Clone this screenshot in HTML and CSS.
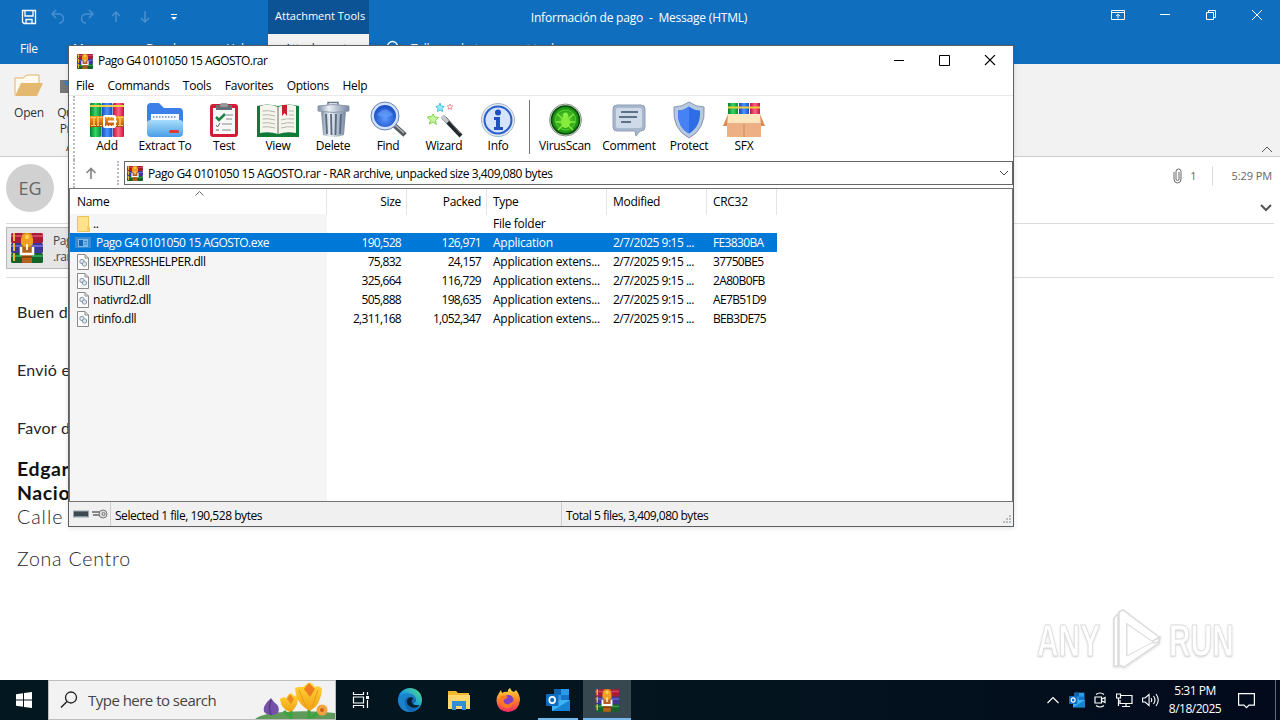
FILE: index.html
```html
<!DOCTYPE html>
<html lang="en">
<head>
<meta charset="utf-8">
<title>Información de pago - Message (HTML)</title>
<link rel="stylesheet" href="styles.css">
</head>
<body>
<svg class="defs" width="0" height="0">
  <defs>
    <linearGradient id="gBlue" x1="0" y1="0" x2="0" y2="1"><stop offset="0" stop-color="#a7dcfb"/><stop offset="1" stop-color="#4a9fe8"/></linearGradient>
    <linearGradient id="gSteel" x1="0" y1="0" x2="1" y2="0"><stop offset="0" stop-color="#7d8fa3"/><stop offset=".35" stop-color="#eaf0f6"/><stop offset="1" stop-color="#7486a0"/></linearGradient>
    <linearGradient id="gG" x1="0" x2="1" y1="0" y2="0"><stop offset="0" stop-color="#0c7a2c"/><stop offset=".5" stop-color="#35d866"/><stop offset="1" stop-color="#0c8a30"/></linearGradient>
    <linearGradient id="gB" x1="0" x2="1" y1="0" y2="0"><stop offset="0" stop-color="#1746b4"/><stop offset=".5" stop-color="#4c94ff"/><stop offset="1" stop-color="#1b4ec0"/></linearGradient>
    <linearGradient id="gR" x1="0" x2="1" y1="0" y2="0"><stop offset="0" stop-color="#c01338"/><stop offset=".5" stop-color="#ff6286"/><stop offset="1" stop-color="#c8153c"/></linearGradient>
    <linearGradient id="gBelt" x1="0" x2="0" y1="0" y2="1"><stop offset="0" stop-color="#f0a02c"/><stop offset=".5" stop-color="#dd7a12"/><stop offset="1" stop-color="#a84e08"/></linearGradient>
    <linearGradient id="gEdge" x1="0" x2="1" y1="1" y2="0"><stop offset="0" stop-color="#0c56a8"/><stop offset=".5" stop-color="#1b9de0"/><stop offset="1" stop-color="#58e07c"/></linearGradient>
    <linearGradient id="gFox" x1="0" x2="0" y1="0" y2="1"><stop offset="0" stop-color="#ffe04a"/><stop offset=".45" stop-color="#ff8a22"/><stop offset="1" stop-color="#f5286a"/></linearGradient>
    <linearGradient id="gPetal" x1="0" x2="0" y1="0" y2="1"><stop offset="0" stop-color="#ffd53a"/><stop offset="1" stop-color="#f2a012"/></linearGradient>
    <radialGradient id="gVirus"><stop offset="0" stop-color="#6fe030"/><stop offset="1" stop-color="#128812"/></radialGradient>
    <radialGradient id="gLens" cx=".5" cy=".6"><stop offset="0" stop-color="#5c9bff"/><stop offset="1" stop-color="#1b4fc4"/></radialGradient>
    <symbol id="rar" viewBox="0 0 32 30">
      <rect x="0" y="0" width="32" height="10" rx="1.5" fill="#a81c38"/><rect x="0" y="2" width="32" height="2" fill="#cf4560"/>
      <rect x="0" y="10" width="32" height="10" rx="1.5" fill="#3c3796"/><rect x="0" y="12" width="32" height="2" fill="#6a68cc"/>
      <rect x="0" y="20" width="32" height="10" rx="1.5" fill="#14642a"/><rect x="0" y="22" width="32" height="2" fill="#2f9c52"/>
      <path d="M3 0v30" stroke="#e2b93a" stroke-width="2" stroke-dasharray="8 2"/>
      <rect x="11" y="0" width="10" height="30" fill="#b4611c"/>
      <path d="M10 11V6q1-6 6-6t6 6v5l-3 3h-6z" fill="#f0a020"/><circle cx="16" cy="4" r="2" fill="#ffd95a"/>
      <path d="M10 14v7h12v-7" fill="none" stroke="#fff" stroke-width="2.500"/><path d="M16 11v6" stroke="#fff3d0" stroke-width="2"/>
      <path d="M11 24h10" stroke="#7d3c08" stroke-width="1.500"/>
    </symbol>
    <symbol id="dll" viewBox="0 0 12 16">
      <path d="M.5.5h7.500l3.500 3.500v11.500H.5z" fill="#fbfbfb" stroke="#8a8a8a"/><path d="M8 .5V4h3.500" fill="none" stroke="#8a8a8a"/>
      <circle cx="5" cy="7.500" r="2.200" fill="#dfe6ec" stroke="#8599aa"/><circle cx="7.500" cy="10" r="2.200" fill="#dfe6ec" stroke="#8599aa"/>
    </symbol>
    <symbol id="outlook" viewBox="0 0 24 22">
      <path d="M8 0h15v12H8z" fill="#2a9be8"/><path d="M8 0h7v6H8z" fill="#0f63b0"/><path d="M15 6h8v6h-8z" fill="#1673c8"/><path d="M6 11l18 0v11H6z" fill="#3db4f2"/><path d="M6 22l18-11v11z" fill="#1683d4"/>
      <rect x="0" y="5" width="12.500" height="12" rx="1" fill="#0f6cc0"/><ellipse cx="6.200" cy="11" rx="2.900" ry="3.200" fill="none" stroke="#fff" stroke-width="1.700"/>
    </symbol>
  </defs>
</svg>

<div class="desktop">
  <header class="titlebar">
    <div class="quick">
      <svg width="16" height="16" viewBox="0 0 16 16"><path d="M1.500 1.500h13v13H3l-1.500-1.500zM4 1.500V7h8V1.500M5 14.500V10.500h6v4" fill="none" stroke="#fff" stroke-width="1.300"/></svg>
      <svg class="dim" width="16" height="16" viewBox="0 0 16 16"><path d="M6 1L2 5l4 4M2 5h7a4.500 4.500 0 010 9"/></svg>
      <svg class="dim" width="16" height="16" viewBox="0 0 16 16"><path d="M10 1l4 4-4 4M14 5H7a4.500 4.500 0 000 9"/></svg>
      <svg class="dim" width="16" height="16" viewBox="0 0 16 16"><path d="M8 13V3M4 7l4-4 4 4"/></svg>
      <svg class="dim" width="16" height="16" viewBox="0 0 16 16"><path d="M8 2v11M4 9l4 4 4-4"/></svg>
      <svg width="16" height="16" viewBox="0 0 16 16"><path d="M5 5.500h6" stroke="#fff"/><path d="M5 8h6l-3 3z" fill="#fff"/></svg>
    </div>
    <div class="tooltab">Attachment Tools</div>
    <div class="doc-title">Información de pago&nbsp; - &nbsp;Message (HTML)</div>
    <div class="win-controls">
      <svg width="14" height="12" viewBox="0 0 14 12"><path d="M.5 1.500h13v9H.5zM.5 3.500h13M7 9.500v-4M5 7.200l2-2 2 2" fill="none" stroke="#fff"/></svg>
      <svg width="12" height="12" viewBox="0 0 12 12"><path d="M1 5.500h10" stroke="#fff"/></svg>
      <svg width="12" height="12" viewBox="0 0 12 12"><path d="M1.500 3.500h7v7h-7zM3.500 3v-1.500h7v7H9" fill="none" stroke="#fff"/></svg>
      <svg width="12" height="12" viewBox="0 0 12 12"><path d="M1 1l10 10M11 1L1 11" stroke="#fff"/></svg>
    </div>
  </header>
  <nav class="tabs">
    <span class="tab-file">File</span><span class="tab-msg">Message</span><span class="tab-dev">Developer</span><span class="tab-help">Help</span><span class="tab-active">Attachments</span>
    <svg width="13" height="18" viewBox="0 0 13 18"><circle cx="6.500" cy="6.500" r="5" fill="none" stroke="#fff" stroke-width="1.300"/></svg><span>Tell me what you want to do</span>
  </nav>
  <section class="ribbon">
    <div class="rb-item open">
      <svg width="30" height="24" viewBox="0 0 30 24"><path d="M1 21V4h8l4-3h12v10" fill="#fffaf0" stroke="#dfb46a"/><path d="M7 9h22l-6 13H1z" fill="#e5b870"/></svg>
      <span>Open</span>
    </div>
    <div class="rb-item print">
      <svg width="26" height="24" viewBox="0 0 26 24"><path d="M1 6h18v13H1z" fill="#777"/><path d="M9.500.5h12v9h-12zM11.500 12.500h11v11h-11z" fill="#fff" stroke="#777"/><path d="M5 7h6v5H7z" fill="#3981be"/></svg>
      <span>Quick<br>Print</span><span class="group">Actions</span>
    </div>
    <svg class="collapse" width="12" height="7" viewBox="0 0 12 7"><path d="M1 6l5-5 5 5" fill="none" stroke="#555"/></svg>
  </section>
  <main class="message">
    <div class="msg-head">
      <div class="avatar">EG</div>
      <div class="meta">
        <div class="meta-row">
          <svg width="9" height="16" viewBox="0 0 9 16"><path d="M1 4v7q0 4 3.500 4T8 11V3.500Q8 1 5.500 1T3 3.500V11q0 1.500 1.500 1.500T6 11V4" fill="none" stroke="#666"/></svg>
          <span>1</span><i></i><span>5:29 PM</span>
        </div>
        <svg class="chev" width="12" height="8" viewBox="0 0 12 8"><path d="M1 1l5 5 5-5" fill="none" stroke="#555" stroke-width="2"/></svg>
      </div>
    </div>
    <div class="attach-bar"><div class="attachment"><svg width="32" height="30"><use href="#rar"/></svg><span>Pago G4<br>.rar</span></div></div>
    <article class="mail">
      <p>Buen día</p><p>Envió el</p><p>Favor de</p>
      <div class="sign"><b>Edgar</b><b>Nacio</b><span class="street">Calle</span><span class="zona">Zona Centro</span></div>
    </article>
    <div class="watermark">
      <span>ANY</span>
      <svg width="60" height="66" viewBox="0 0 60 66"><path d="M9 58V10l4-4v52zM14 4l4-2 36 27v5l-5 1-27-19v31l33-18-1 6-35 24-5-2z" fill="#fff" stroke="#dcdcdc" stroke-width="1.500"/><path d="M22 16v32l26-14z" fill="#fff" stroke="#ddd"/></svg>
      <span>RUN</span>
    </div>
  </main>

  <footer class="taskbar">
    <div class="start"><svg width="16" height="16" viewBox="0 0 16 16"><path d="M0 2.200L7 1.200V7.500H0zM8 1l8-1v7.500H8zM0 8.500h7v6.300l-7-1zM8 8.500h8V16l-8-1z" fill="#fff"/></svg></div>
    <div class="search">
      <svg width="18" height="18" viewBox="0 0 18 18"><circle cx="11" cy="6.500" r="5.500" fill="none" stroke="#222" stroke-width="1.300"/><path d="M7 10.500L1 16.500" stroke="#222" stroke-width="1.400"/></svg>
      <span>Type here to search</span>
      <svg class="flowers" width="80" height="37" viewBox="0 0 80 37">
        <path d="M0 37q8-6 30-7 24-2 50 1v6z" fill="#5f9a5a"/><path d="M16 16q-9 8-7 14 6 6 14 1 3-6-4-11z" fill="#7451a8"/><path d="M16 18q-3 8 0 15" stroke="#543a88" stroke-width="1.500" fill="none"/>
        <path d="M36 37V27M54 37V24M56 35q7-2 9-9M35 34q-4-2-6-5" stroke="#39a33d" stroke-width="3" fill="none"/>
        <path d="M25 17q3-3 6-1l3-4q3-2 5 2 4-2 4 3-1 10-8 13-9-3-10-13z" fill="url(#gPetal)"/><path d="M32 17l3-5 4 5-3 5z" fill="#ea8a1c"/>
        <path d="M40 6q5-2 8-1l5-4q5-1 6 4 6-2 8 2-1 16-12 22-14-7-15-23z" fill="url(#gPetal)"/><path d="M49 7l5-6 6 6-5 8z" fill="#ed7d1e"/><path d="M44 8l7 17M63 8l-6 17" stroke="#e99a15" stroke-width="1" fill="none"/>
        <circle cx="67" cy="28" r="5.500" fill="#f5a33c"/><circle cx="67" cy="28" r="2" fill="#c9601c"/>
      </svg>
    </div>
    <div class="apps">
      <div><svg width="18" height="16" viewBox="0 0 18 16"><path d="M1.500 0v2.500h10V0M1.500 16v-2.500h10V16M1.500 5h10v6h-10zM15.500 0v3M15.500 8v8" fill="none" stroke="#fff" stroke-width="1.200"/><rect x="14" y="4" width="3" height="3" fill="#fff"/></svg></div>
      <div><svg width="24" height="24" viewBox="0 0 24 24"><circle cx="12" cy="12" r="12" fill="url(#gEdge)"/><path d="M0 12Q3 5 11 6q7 1 7 6 0 3-4 4 2 3 8 1-4 7-11 7Q1 23 0 12z" fill="#1467b4"/><path d="M9 12q2-4 7-2-3 1-2 5 2 3 8 2-4 4-9 2-5-2-4-7z" fill="#04202f"/><path d="M0 12Q3 4 12 5.500 18 7 17 12q-2-4-7-3-5 2-3 8 1 4 5 7Q1 23 0 12z" fill="#1b82cc"/></svg></div>
      <div><svg width="22" height="20" viewBox="0 0 22 20"><path d="M0 1h8l2 2h11v16H0z" fill="#f3b92e"/><path d="M0 5h22v14H0z" fill="#ffd86c"/><path d="M4 11h14v9h-4v-4H8v4H4z" fill="#2f8fd2"/></svg></div>
      <div><svg width="24" height="24" viewBox="0 0 24 24"><path d="M3 5l2-3 1 3q3-2 6-1-1-2 2-4 1 3 4 4l2-2q4 5 4 10-1 11-12 12Q1 23 .5 13 .5 8 3 5z" fill="url(#gFox)"/><circle cx="12.500" cy="12" r="5" fill="#8340c6"/><path d="M5 8q4-1 7 1-3 3-5 3-1 3 3 4 4 1 7-3 0 7-7 7-8-2-5-12z" fill="#ff7a23"/></svg></div>
      <div class="running"><svg width="24" height="22"><use href="#outlook"/></svg></div>
      <div class="current"><svg width="24" height="23"><use href="#rar"/></svg></div>
    </div>
    <div class="tray">
      <svg width="12" height="8" viewBox="0 0 12 8"><path d="M.5 7L6 1.500 11.500 7" fill="none" stroke="#fff" stroke-width="1.200"/></svg>
      <svg width="16" height="16"><use href="#outlook"/></svg>
      <svg width="12" height="16" viewBox="0 0 12 16"><path d="M2 2.500q4-3 8 0M2 13.500q4 3 8 0M1 5h6.500v6H1zM8 7l3-1.500v5L8 9" fill="none" stroke="#fff" stroke-width="1.200"/></svg>
      <svg width="17" height="15" viewBox="0 0 17 15"><path d="M5 2.500h11v8H4V7M10 10.500v3M6 13.500h8M.5 1h4v4h-4zM2.500 5v8" fill="none" stroke="#fff" stroke-width="1.200"/></svg>
      <svg width="17" height="14" viewBox="0 0 17 14"><path d="M.6 5v4h2.500l4 3.500v-11L3 5zM9 5q1.500 2 0 4M11.500 3q3 4 0 8M14 1q4.500 6 0 12" fill="none" stroke="#fff" stroke-width="1.100"/></svg>
    </div>
    <div class="clock"><span>5:31 PM</span><span>8/18/2025</span></div>
    <svg class="notice" width="17" height="16" viewBox="0 0 17 16"><path d="M.6.600h15.800v11.500H11L8.500 14.600 6 12.100H.6z" fill="none" stroke="#fff" stroke-width="1.200"/></svg>
    <div class="peek"></div>
  </footer>

  <section class="rar-window">
    <div class="rw-title">
      <svg width="16" height="15"><use href="#rar"/></svg><span>Pago G4 0101050 15 AGOSTO.rar</span>
      <div class="rw-controls">
        <svg width="12" height="12" viewBox="0 0 12 12"><path d="M1 5.500h10" stroke="#000"/></svg>
        <svg width="12" height="12" viewBox="0 0 12 12"><path d="M.5.500h10v10H.5z" fill="none" stroke="#000"/></svg>
        <svg width="12" height="12" viewBox="0 0 12 12"><path d="M1 0l10 10M11 0L1 10" stroke="#000" stroke-width="1.100"/></svg>
      </div>
    </div>
    <div class="rw-menu"><span>File</span><span>Commands</span><span>Tools</span><span>Favorites</span><span>Options</span><span>Help</span></div>
    <div class="rw-tools">
      <div class="tool"><svg viewBox="0 0 36 36"><rect x="1" y="1" width="11" height="34" rx="1" fill="url(#gG)"/><rect x="12.500" y="1" width="11" height="34" rx="1" fill="url(#gB)"/><rect x="24" y="1" width="11" height="34" rx="1" fill="url(#gR)"/><path d="M1 4h34" stroke="#f2d046" stroke-width="2"/><path d="M1 14h34v11H1z" fill="url(#gBelt)"/><path d="M2 15.500h32M2 23.500h32" stroke="#ffd47a" stroke-dasharray="2 1"/><path d="M5 15v9M9 15v9M31 15v9" stroke="#ffc95c" stroke-width="1.500"/><rect x="15" y="14" width="11" height="11" rx="1" fill="none" stroke="#fff" stroke-width="2"/><path d="M19 19.500h9" stroke="#fff" stroke-width="2"/></svg><span>Add</span></div>
      <div class="tool"><svg viewBox="0 0 36 36"><path d="M0 5q0-4 4-4h8l5 5h15q4 0 4 4v21H0z" fill="#3c7fe8"/><path d="M4 12h28v8H4z" fill="#f4f8ff"/><path d="M6 15h24" stroke="#8da8c5" stroke-width="2" stroke-dasharray="1.500 1.500"/><path d="M0 21q0-3 4-3h28q4 0 4 3v10q0 4-4 4H4q-4 0-4-4z" fill="url(#gBlue)"/><rect x="22" y="28" width="10" height="3" rx="1.500" fill="#e03a34"/></svg><span>Extract To</span></div>
      <div class="tool"><svg viewBox="0 0 36 36"><rect x="4" y="2" width="28" height="33" rx="3" fill="#d21c36"/><rect x="7" y="6" width="22" height="26" fill="#f7f7f7"/><path d="M10 3h16v5H10z" fill="#696e77"/><rect x="14" y="1" width="8" height="4" rx="2" fill="#999"/><path d="M10 15l3 3 6-6" fill="none" stroke="#188446" stroke-width="2.500"/><path d="M20 13h7M20 17h6M16 22h10M16 28h9" stroke="#888"/><path d="M10 23l1.500 2 2.500-4M10 28h3" fill="none" stroke="#666"/></svg><span>Test</span></div>
      <div class="tool wide"><svg viewBox="0 0 42 36"><path d="M0 4q10-3 21 0 11-3 21 0v31H0z" fill="#107b38"/><path d="M3 4q9-3 18 1v27q-9-3-18-1zM39 4q-9-3-18 1v27q9-3 18-1z" fill="#f5f4ed"/><path d="M21 5v27" stroke="#9a9a90" stroke-width="1.500"/><path d="M5.500 9q6-1 12.500 1M5.500 13q6-1 12.500 1M5.500 17q6-1 12.500 1M5.500 21q6-1 12.500 1M5.500 25q6-1 12.500 1M32 9h5M32 13h5M24 18q6-2 13-1M24 22q6-2 13-1M24 26q6-2 13-1" fill="none" stroke="#b5b5b0"/><path d="M25 3h5v11l-2.500-3L25 14z" fill="#c9202f"/></svg><span>View</span></div>
      <div class="tool"><svg viewBox="0 0 36 36"><path d="M13 3V.5h10V3" fill="none" stroke="#66788b" stroke-width="1.500"/><path d="M6 9h25l-2 24q-11 4-21 0z" fill="url(#gSteel)"/><path d="M11 12l1 20M16 12l.5 21M21 12l-.5 21M26 12l-1 20" stroke="#56697f" stroke-width="1.800"/><path d="M3 4q15-3 31 0v5q-15 3-31 0z" fill="url(#gSteel)" stroke="#8d9bad"/></svg><span>Delete</span></div>
      <div class="tool"><svg viewBox="0 0 36 36"><path d="M24 23l11 10" stroke="#54595f" stroke-width="5"/><path d="M25 23l9 8" stroke="#b3b8bc" stroke-width="1.500"/><circle cx="15" cy="14" r="12.500" fill="url(#gLens)" stroke="#d5e2f6" stroke-width="3"/><circle cx="15" cy="14" r="14" fill="none" stroke="#6784b4"/><path d="M7 13q8-11 16 0-8 4-16 0z" fill="#75aaff" opacity=".5"/></svg><span>Find</span></div>
      <div class="tool"><svg viewBox="0 0 36 36"><path d="M17 15l18 19" stroke="#24292e" stroke-width="4"/><path d="M16 14l6 6" stroke="#c5c9cc" stroke-width="4"/><path d="M20 15l14 16" stroke="#777"/><path d="M7 12l1.500 3 4 .5-3 3 .8 4L7 20l-3.500 2 .8-4-3-3 4-.5z" fill="#c8f5a0" stroke="#7dd24e"/><path d="M14 1l1.200 3 3 .5-2.200 2 .5 3-2.500-1.500L11.500 9.500l.5-3-2.200-2 3-.5z" fill="#9eeafa" stroke="#3fc5e2"/><path d="M24 2l.8 1.800 2 .2-1.400 1.300.3 2L24 6.300l-1.700 1 .3-2L21.200 4l2-.2z" fill="#fff" stroke="#e89098"/></svg><span>Wizard</span></div>
      <div class="tool"><svg viewBox="0 0 36 36"><circle cx="18" cy="18" r="16.500" fill="#e4e9f2" stroke="#aab7cb"/><circle cx="18" cy="18" r="13.500" fill="#d5e3fc" stroke="#2860cb" stroke-width="2"/><circle cx="18" cy="10.500" r="3" fill="#1e50c0"/><path d="M14 15h6v10h3v3h-9v-3h2v-7h-2z" fill="#1e50c0"/></svg><span>Info</span></div>
      <div class="sep"></div>
      <div class="tool"><svg viewBox="0 0 36 36"><circle cx="18.500" cy="18" r="16" fill="#d9dfd9" stroke="#8b968b"/><circle cx="18.500" cy="18" r="14" fill="url(#gVirus)" stroke="#074a07" stroke-width="1.500"/><circle cx="18.500" cy="18" r="10" fill="none" stroke="#53d62f"/><ellipse cx="18.500" cy="20" rx="4.500" ry="6" fill="#86ed3e"/><circle cx="18.500" cy="13" r="2.500" fill="#8cef43"/><path d="M10 12l5 4M27 12l-5 4M9 20h19M11 28l5-5M26 28l-5-5" stroke="#86ed3e" stroke-width="1.300"/></svg><span>VirusScan</span></div>
      <div class="tool"><svg viewBox="0 0 36 36"><path d="M6 3h24q4 0 4 4v18q0 4-4 4h-1l-4 5-1-5H6q-4 0-4-4V7q0-4 4-4z" fill="#a7b8cc" stroke="#8e9fb5"/><rect x="5" y="6" width="26" height="20" rx="2" fill="#cedae8"/><path d="M10 10h17M8 15h18M10 20h10" stroke="#384f6a" stroke-width="1.700"/></svg><span>Comment</span></div>
      <div class="tool"><svg viewBox="0 0 36 36"><path d="M18 0q7 5 15 5 2 22-15 31Q1 27 3 5q8 0 15-5z" fill="#b7c9de" stroke="#8396b0"/><path d="M18 4.500q5 4 11 4 1 16-11 23Q6 25 7 8.500q6 0 11-4z" fill="#2e6de5"/><path d="M18 4.500v27Q6 25 7 8.500q6 0 11-4z" fill="#4682f4"/></svg><span>Protect</span></div>
      <div class="tool wide"><svg viewBox="0 0 42 36"><rect x="5" y="1" width="10" height="14" fill="url(#gG)"/><rect x="16" y="1" width="10" height="14" fill="url(#gB)"/><rect x="27" y="1" width="10" height="14" fill="url(#gR)"/><path d="M5 5.500h32" stroke="#edcd38" stroke-width="2"/><path d="M5 12h32l3 10H2z" fill="#fbe6bd"/><path d="M4 21h34v14H4z" fill="#edb085"/><path d="M5 12L0 24h4zM37 12l5 12h-4z" fill="#d98c57"/><path d="M21 22v13" stroke="#d08a58"/></svg><span>SFX</span></div>
    </div>
    <div class="rw-address">
      <div class="up"><svg width="12" height="12" viewBox="0 0 12 12"><path d="M6 12V1.500M1.500 6L6 1.500 10.500 6" fill="none" stroke="#888" stroke-width="1.700"/></svg></div>
      <div class="path"><svg width="16" height="15"><use href="#rar"/></svg><span>Pago G4 0101050 15 AGOSTO.rar - RAR archive, unpacked size 3,409,080 bytes</span><svg class="drop" width="10" height="6" viewBox="0 0 10 6"><path d="M1 1l4 4 4-4" fill="none" stroke="#444"/></svg></div>
    </div>
    <div class="list">
      <svg class="sort" width="9" height="5" viewBox="0 0 9 5"><path d="M.5 4.500l4-4 4 4" fill="none" stroke="#666"/></svg>
      <div class="row head"><div>Name</div><div>Size</div><div>Packed</div><div>Type</div><div>Modified</div><div>CRC32</div></div>
      <div class="row"><div class="name"><svg width="14" height="16" viewBox="0 0 14 16"><path d="M.5.500h11v10l1 1v4H.5z" fill="#ffe28a" stroke="#e8c45a"/><path d="M11 10v5" stroke="#e4b83f"/></svg><span class="up-dir">..</span></div><div></div><div></div><div>File folder</div><div></div><div></div></div>
      <div class="row selected"><div class="name"><svg width="16" height="11" viewBox="0 0 16 11"><rect width="16" height="11" fill="#3b8ad2"/><rect x="3" y="2" width="10" height="8" fill="#79b8ea"/><rect x="4" y="3" width="4" height="6" fill="#1467b2"/><path d="M9 4.500h3M9 7h3" stroke="#3d83bd"/></svg><span>Pago G4 0101050 15 AGOSTO.exe</span></div><div>190,528</div><div>126,971</div><div>Application</div><div>2/7/2025 9:15 ...</div><div>FE3830BA</div></div>
      <div class="row"><div class="name"><svg width="12" height="16"><use href="#dll"/></svg><span>IISEXPRESSHELPER.dll</span></div><div>75,832</div><div>24,157</div><div>Application extens...</div><div>2/7/2025 9:15 ...</div><div>37750BE5</div></div>
      <div class="row"><div class="name"><svg width="12" height="16"><use href="#dll"/></svg><span>IISUTIL2.dll</span></div><div>325,664</div><div>116,729</div><div>Application extens...</div><div>2/7/2025 9:15 ...</div><div>2A80B0FB</div></div>
      <div class="row"><div class="name"><svg width="12" height="16"><use href="#dll"/></svg><span>nativrd2.dll</span></div><div>505,888</div><div>198,635</div><div>Application extens...</div><div>2/7/2025 9:15 ...</div><div>AE7B51D9</div></div>
      <div class="row"><div class="name"><svg width="12" height="16"><use href="#dll"/></svg><span>rtinfo.dll</span></div><div>2,311,168</div><div>1,052,347</div><div>Application extens...</div><div>2/7/2025 9:15 ...</div><div>BEB3DE75</div></div>
      <div class="filler"></div>
    </div>
    <div class="status">
      <div class="s-icons"><svg width="16" height="8" viewBox="0 0 16 8"><rect x=".5" y="1" width="15" height="6" fill="#3d4a50" stroke="#9aa5aa"/><path d="M2 6.500h12" stroke="#7f989e"/></svg><svg width="16" height="10" viewBox="0 0 16 10"><path d="M0 3h8M1 6h7" stroke="#888" stroke-width="2"/><circle cx="11" cy="5" r="4" fill="#ddd" stroke="#777"/><circle cx="11.500" cy="5" r="1.500" fill="none" stroke="#777"/></svg></div>
      <div class="s-left">Selected 1 file, 190,528 bytes</div>
      <div class="s-right">Total 5 files, 3,409,080 bytes</div>
      <svg class="grip" width="10" height="10" viewBox="0 0 10 10"><path d="M7 1h2M4 4h2M7 4h2M1 7h2M4 7h2M7 7h2" stroke="#bbb" stroke-width="2"/></svg>
    </div>
  </section>
</div>
</body>
</html>
```
FILE: styles.css
```css
* { box-sizing: border-box; }
body { margin: 0; font: 12px/16px "Open Sans", "Noto Sans", sans-serif; letter-spacing: -0.42px; color: #111; }
svg { display: block; flex: none; }
span { white-space: nowrap; }
.defs { position: absolute; }
.desktop { position: relative; width: 1280px; height: 720px; overflow: hidden; display: flex; flex-direction: column; background: #fff; }

.titlebar { height: 34px; background: #106ebe; color: #fff; display: flex; }
.quick { width: 268px; padding: 9px 0 0 21px; display: flex; gap: 13px; }
.dim { fill: none; stroke: #4a90d0; stroke-width: 1.5; }
.tooltab { width: 101px; background: #0b5394; padding-left: 7px; line-height: 32px; font-size: 11px; letter-spacing: 0; }
.doc-title { width: 540px; text-align: center; line-height: 36px; letter-spacing: -0.2px; }
.win-controls { margin-left: auto; padding: 9px 17px 0 0; display: flex; gap: 34px; }

.tabs { height: 30px; background: #106ebe; color: #fff; display: flex; line-height: 30px; padding-left: 20px; letter-spacing: -0.3px; }
.tab-file { width: 53px; }
.tab-msg { width: 73px; }
.tab-dev { width: 80px; }
.tab-help { width: 42px; }
.tab-active { width: 101px; margin-right: 16px; background: #f2f2f2; color: #333; text-align: center; }
.tabs svg { margin: 6px 12px 0 1px; }

.ribbon { height: 93px; background: #f2f2f2; border-bottom: 1px solid #cdcdcd; display: flex; color: #333; }
.rb-item { display: flex; flex-direction: column; align-items: center; text-align: center; }
.open { width: 58px; padding-top: 10px; gap: 7px; letter-spacing: -0.2px; }
.print { width: 32px; padding: 10px 0 0; gap: 7px; margin-left: -2px; }
.print .group { margin: -5px 0 0 26px; }
.collapse { margin: 82px 7px 0 auto; }

.message { height: 523px; display: flex; flex-direction: column; }
.msg-head { height: 67px; margin: 0 6px; border-bottom: 1px solid #dcdcdc; display: flex; justify-content: space-between; }
.avatar { width: 48px; height: 48px; margin-top: 7px; border-radius: 50%; background: #d1d1d1; color: #666; font-size: 18px; line-height: 48px; text-align: center; letter-spacing: 0; }
.meta { color: #666; font-size: 11px; letter-spacing: -0.1px; }
.meta-row { display: flex; align-items: center; height: 20px; margin: 9px 2px 0 0; }
.meta-row span { margin-left: 8px; }
.meta-row i { width: 1px; height: 20px; background: #ddd; margin: 0 11px 0 15px; }
.meta .chev { margin: 18px 2px 0 auto; }
.attach-bar { height: 54px; margin: 0 6px; padding-top: 3px; border-bottom: 1px solid #dcdcdc; }
.attachment { width: 180px; height: 42px; border: 1px solid #b8b8b8; background: #e5e5e5; padding: 5px 4px; display: flex; gap: 10px; color: #444; }
.mail { padding: 19px 17px 0; font: 16px/30px Lato, "Open Sans", sans-serif; letter-spacing: .25px; color: #262626; }
.mail p { margin: 0 0 28px; }
.mail p:nth-of-type(3) { margin-bottom: 14px; }
.sign { display: flex; flex-direction: column; font-size: 19.5px; line-height: 24px; letter-spacing: .6px; }
.sign b { font-weight: 700; color: #111; }
.street { letter-spacing: 1px; font-weight: 300; }
.zona { margin-top: 18px; font-weight: 300; letter-spacing: .8px; }
.watermark { position: absolute; left: 1037px; top: 608px; display: flex; align-items: center; gap: 4px; font: 700 44px/60px "Liberation Sans", sans-serif; color: #fff; -webkit-text-stroke: 1px #dcdcdc; text-shadow: 0 1px 3px #ccc; }
.watermark span { width: 64px; transform: scaleX(.68); transform-origin: left; letter-spacing: 0; }
.watermark svg { filter: drop-shadow(0 1px 1px #ddd); }

.taskbar { height: 40px; display: flex; background: linear-gradient(90deg, #02171f, #04141f 60%, #020a1c); color: #fff; }
.start { width: 48px; padding: 12px 16px; }
.search { width: 288px; background: #f2f2f2; border: 1px solid #bcbcbc; display: flex; align-items: center; padding-left: 11px; color: #444; font-size: 15px; }
.search span { margin-left: 10px; letter-spacing: -0.52px; }
.search .flowers { margin: 1px 0 0 auto; }
.apps { display: flex; }
.apps div { width: 49px; height: 40px; display: flex; align-items: center; justify-content: center; }
.apps div:nth-child(2) { padding-left: 1px; }
.apps .running { box-shadow: inset 0 -2px #76b9ed; margin-left: 6px; width: 40px; }
.apps .current { width: 48px; margin-left: 5px; background: #384850; box-shadow: inset 0 -2px #76b9ed; }
.tray { margin-left: auto; display: flex; align-items: center; gap: 9.500px; }
.clock { width: 72px; display: flex; flex-direction: column; text-align: center; padding-top: 2px; line-height: 18px; letter-spacing: -0.5px; }
.notice { margin: 13px 20px 0 7px; }
.peek { width: 5px; border-left: 1px solid #667; }

.rar-window { position: absolute; left: 68px; top: 45px; width: 946px; height: 482px; background: #fff; border: 1px solid #5a5f63; box-shadow: 0 1px 5px rgba(0,0,0,.12); display: flex; flex-direction: column; color: #000; }
.rw-title { height: 30px; padding-left: 8px; display: flex; align-items: center; gap: 5px; letter-spacing: -0.55px; }
.rw-controls { display: flex; gap: 33.5px; margin: 0 17px 0 auto; }
.rw-menu { height: 20px; padding-left: 7px; display: flex; gap: 13.5px; line-height: 20px; border-bottom: 1px solid #e9e9e9; letter-spacing: -0.27px; }
.rw-tools { height: 64px; margin-left: 4px; padding-left: 8px; border-left: 2px dotted #bbb; display: grid; grid-template-columns: 48px 68px 50px 58px 52px 58px 54px 54px 10px 60px 68px 52px 58px; }
.tool { display: flex; flex-direction: column; align-items: center; padding-top: 6px; letter-spacing: -0.3px; }
.tool svg { width: 36px; height: 36px; overflow: visible; }
.tool.wide svg { width: 42px; }
.sep { width: 1px; height: 54px; margin: 4px 0 0 4px; background: #777; }
.rw-address { height: 28px; display: flex; padding: 1px 0 3px; margin-left: 4px; border-left: 2px dotted #bbb; }
.up { width: 44px; border-right: 2px dotted #bbb; padding: 6px 0 0 10px; }
.path { flex: 1; margin-left: 5px; height: 24px; border: 1px solid #666; display: flex; align-items: center; padding-left: 2px; gap: 5px; line-height: 18px; letter-spacing: -0.44px; }
.path span { padding-top: 1px; }
.path .drop { margin: 0 3px 0 auto; }
.list { position: relative; height: 314px; border: 1px solid #747474; display: flex; flex-direction: column; }
.sort { position: absolute; left: 125px; top: 2px; }
.row { height: 19px; display: grid; grid-template-columns: 257px 80px 80px 120px 100px 70px; line-height: 19px; width: 707px; white-space: nowrap; }
.row > div { padding: 0 6px; }
.row > div:first-child { background: #f5f5f5; }
.row > div:nth-child(2), .row > div:nth-child(3) { text-align: right; letter-spacing: -0.68px; }
.row > div:nth-child(4) { letter-spacing: -0.26px; }
.row > div:nth-child(5) { letter-spacing: -0.5px; }
.row > div:nth-child(6) { letter-spacing: -0.65px; }
.row.head { height: 25px; line-height: 26px; }
.row.head > div:nth-child(n) { border-right: 1px solid #e5e5e5; background: #fff; letter-spacing: -0.3px; }
.row.head > div:nth-child(2), .row.head > div:nth-child(3) { padding-right: 5px; }
.row.head > div:first-child { padding-left: 7px; }
.row > .name { display: flex; align-items: center; gap: 4px; padding-left: 7px; }
.row .up-dir { margin-left: -2px; }
.row.selected { background: #0078d7; color: #fff; }
.row.selected > .name { background: none; padding-left: 5px; gap: 5px; letter-spacing: -0.54px; }
.filler { flex: 1; width: 257px; background: #f5f5f5; }
.status { height: 24px; background: #f0f0f0; display: flex; line-height: 28px; letter-spacing: -0.46px; }
.s-icons { width: 42px; display: flex; align-items: center; gap: 3px; padding-left: 4px; border-right: 1px solid #ccc; }
.s-left { width: 451px; padding-left: 4px; border-right: 1px solid #ccc; }
.s-right { padding-left: 4px; letter-spacing: -0.5px; }
.grip { margin: 13px 1px 0 auto; }
```
